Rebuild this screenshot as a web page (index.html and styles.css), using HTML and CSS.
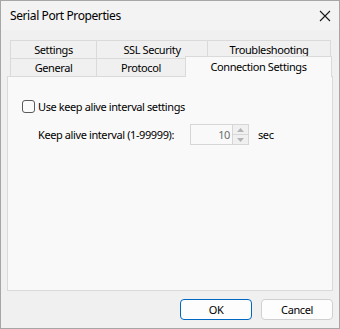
FILE: index.html
```html
<!DOCTYPE html>
<html lang="en">
<head>
    <meta charset="UTF-8">
    <title>Serial Port Properties</title>
    <link rel="stylesheet" href="styles.css">
</head>
<body>
    <div class="janela">
        <div class="titulo">
            <span>Serial Port Properties</span>
            <svg class="fechar" width="12" height="12" viewBox="0 0 12 12">
                <path d="M1 1 L11 11 M11 1 L1 11" stroke="#1a1a1a" stroke-width="1.1" fill="none"/>
            </svg>
        </div>
        <div class="corpo">
            <div class="abas">
                <div class="linha">
                    <div class="aba a1">Settings</div>
                    <div class="aba a2">SSL Security</div>
                    <div class="aba a3">Troubleshooting</div>
                </div>
                <div class="linha">
                    <div class="aba a1">General</div>
                    <div class="aba a4">Protocol</div>
                    <div class="aba ativa">Connection Settings</div>
                </div>
            </div>
            <div class="painel">
                <label class="check">
                    <span class="caixa"></span>
                    Use keep alive interval settings
                </label>
                <div class="intervalo">
                    <span class="rotulo">Keep alive interval (1-99999):</span>
                    <div class="spin">
                        <span class="valor">10</span>
                        <div class="setas">
                            <div class="seta"><svg width="7" height="4" viewBox="0 0 7 4"><path d="M0 4 L3.5 0 L7 4 Z" fill="#b4b4b4"/></svg></div>
                            <div class="seta"><svg width="7" height="4" viewBox="0 0 7 4"><path d="M0 0 L3.5 4 L7 0 Z" fill="#b4b4b4"/></svg></div>
                        </div>
                    </div>
                    <span class="unidade">sec</span>
                </div>
            </div>
            <div class="rodape">
                <button class="botao padrao">OK</button>
                <button class="botao">Cancel</button>
            </div>
        </div>
    </div>
</body>
</html>
```

FILE: styles.css
```css
* {
    margin: 0;
    padding: 0;
    box-sizing: border-box;
}
body {
    font-family: 'Noto Sans', 'Liberation Sans', sans-serif;
    font-size: 11px;
    letter-spacing: -0.4px;
    color: #000;
    background: #f0f0f0;
}
.janela {
    width: 340px;
    height: 329px;
    border: 1px solid #a6a6a6;
    background: #f0f0f0;
    display: flex;
    flex-direction: column;
}
.titulo {
    height: 29px;
    background: #f3f3f3;
    display: flex;
    align-items: center;
    justify-content: space-between;
    padding: 0 8px 0 9px;
    font-size: 12px;
}
.corpo {
    padding: 10px 6px 0 6px;
    display: flex;
    flex-direction: column;
}
.abas {
    margin-left: 3px;
}
.linha {
    display: flex;
    height: 18px;
    align-items: flex-end;
}
.aba {
    height: 18px;
    line-height: 17px;
    text-align: center;
    white-space: nowrap;
    border: 1px solid #dadada;
    border-bottom: none;
    background: #f0f0f0;
    margin-right: -1px;
}
.a1 {
    width: 87px;
}
.a2 {
    width: 112px;
}
.a3 {
    width: 124px;
}
.a4 {
    width: 90px;
}
.aba.ativa {
    width: 147px;
    height: 21px;
    line-height: 19px;
    background: #f9f9f9;
    position: relative;
    z-index: 1;
    margin-bottom: -1px;
}
.painel {
    height: 215px;
    border: 1px solid #dadada;
    background: #f9f9f9;
    padding: 22px 14px 0 14px;
}
.check {
    display: flex;
    align-items: center;
    gap: 3px;
    height: 15px;
}
.caixa {
    width: 13px;
    height: 13px;
    border: 1px solid #5a5a5a;
    border-radius: 3px;
    background: #fbfbfb;
}
.intervalo {
    display: flex;
    align-items: center;
    margin-top: 10px;
    padding-left: 16px;
}
.rotulo {
    width: 152px;
    white-space: nowrap;
}
.spin {
    width: 59px;
    height: 21px;
    border: 1px solid #d6d6d6;
    background: #f9f9f9;
    display: flex;
    justify-content: flex-end;
}
.valor {
    color: #6d6d6d;
    line-height: 19px;
    padding-right: 2px;
}
.setas {
    width: 16px;
    border-left: 1px solid #d6d6d6;
    display: flex;
    flex-direction: column;
}
.seta {
    flex: 1;
    display: flex;
    align-items: center;
    justify-content: center;
    background: #f0f0f0;
}
.seta + .seta {
    border-top: 1px solid #d6d6d6;
}
.unidade {
    margin-left: 9px;
}
.rodape {
    display: flex;
    justify-content: flex-end;
    gap: 9px;
    padding-top: 8px;
}
.botao {
    width: 72px;
    height: 21px;
    font-family: 'Noto Sans', 'Liberation Sans', sans-serif;
    font-size: 11px;
    letter-spacing: -0.4px;
    color: #000;
    background: #fdfdfd;
    border: 1px solid #d0d0d0;
    border-radius: 4px;
}
.botao.padrao {
    border-color: #0067c0;
    box-shadow: inset 0 0 0 1px #ffffff;
}
```
